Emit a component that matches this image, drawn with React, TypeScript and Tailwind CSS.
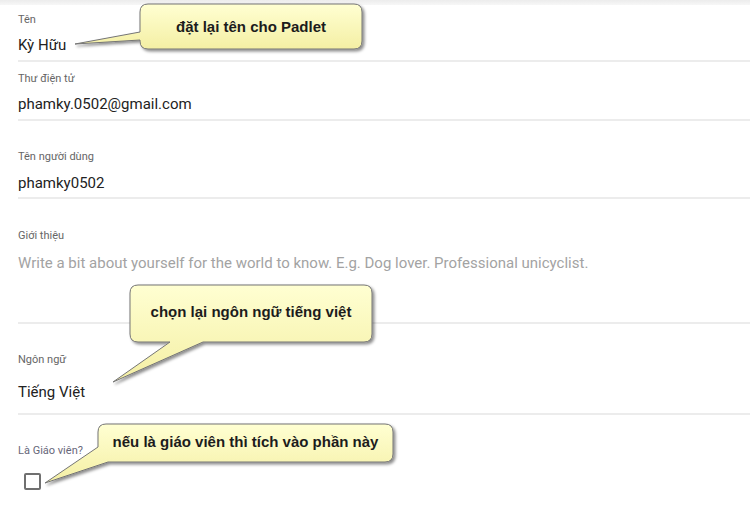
import React from 'react';

const fieldFont = { fontFamily: 'Roboto, "Liberation Sans", sans-serif' };
const noteFont = { fontFamily: '"Liberation Sans", Arial, sans-serif' };

function Field({ label, value, placeholder, top, gap, bottom }: { label: string; value?: string; placeholder?: string; top: string; gap: string; bottom: string }) {
  return (
    <div className={`${top}`}>
      <div className="text-[11px] leading-4 text-[#666]">{label}</div>
      <div className={`${gap} ${bottom} text-[15px] leading-6 ${placeholder ? 'text-[#a3a3a3]' : 'text-[#222]'}`}>
        {value ?? placeholder}
      </div>
      <div className="h-[2px] bg-[#ececec]" />
    </div>
  );
}

const callouts = [
  {
    d: 'M148,4 H354 Q362,4 362,12 V41 Q362,49 354,49 H148 Q140,49 140,41 V40 L75,44 L140,32 V12 Q140,4 148,4 Z',
  },
  {
    d: 'M138,285 H364 Q372,285 372,293 V334 Q372,342 364,342 H203 L113,382 L170,342 H138 Q130,342 130,334 V293 Q130,285 138,285 Z',
  },
  {
    d: 'M106,424 H385 Q393,424 393,432 V454 Q393,462 385,462 H108 L45,483 L98,447 V432 Q98,424 106,424 Z',
  },
];

export default function App() {
  return (
    <div className="relative w-[750px] h-[509px] bg-white overflow-hidden" style={fieldFont}>
      <div className="h-[5px] bg-gradient-to-b from-[#ececec] to-[#f7f7f7]" />

      <div className="pl-[18px]">
        <Field label="Tên" value="Kỳ Hữu" top="pt-[7px]" gap="mt-[5px]" bottom="mb-[3px]" />
        <Field label="Thư điện tử" value="phamky.0502@gmail.com" top="pt-[9px]" gap="mt-[5px]" bottom="mb-[3px]" />
        <Field label="Tên người dùng" value="phamky0502" top="pt-[28px]" gap="mt-[6px]" bottom="mb-[2px]" />
        <Field
          label="Giới thiệu"
          placeholder="Write a bit about yourself for the world to know. E.g. Dog lover. Professional unicyclist."
          top="pt-[29px]"
          gap="mt-[7px]"
          bottom="mb-[47px]"
        />
        <Field label="Ngôn ngữ" value="Tiếng Việt" top="pt-[28px]" gap="mt-[12px]" bottom="mb-[9px]" />

        <div className="pt-[28px]">
          <div className="text-[11px] leading-4 text-[#67677a]">Là Giáo viên?</div>
          <div className="mt-[14px] ml-[6px] w-[17px] h-[17px] border-2 border-[#707070] rounded-[2px]" />
        </div>
      </div>

      {/* annotation callouts */}
      <svg className="absolute inset-0 pointer-events-none" width="750" height="509" viewBox="0 0 750 509">
        <defs>
          <linearGradient id="callFill" x1="0" y1="0" x2="0" y2="1">
            <stop offset="0" stopColor="#ffffd2" />
            <stop offset="1" stopColor="#f4efa4" />
          </linearGradient>
          <filter id="callShadow" x="-10%" y="-10%" width="130%" height="140%">
            <feDropShadow dx="2" dy="2" stdDeviation="1.5" floodColor="#000" floodOpacity="0.45" />
          </filter>
        </defs>
        {callouts.map((c, i) => (
          <path key={i} d={c.d} fill="url(#callFill)" stroke="#757575" strokeWidth="1" filter="url(#callShadow)" />
        ))}
      </svg>

      <div
        className="absolute left-[140px] top-[5px] w-[222px] h-[45px] flex items-center justify-center text-[15px] font-bold text-[#1c1c1c]"
        style={noteFont}
      >
        đặt lại tên cho Padlet
      </div>
      <div
        className="absolute left-[130px] top-[285px] w-[242px] h-[54px] flex items-center justify-center text-[15px] font-bold text-[#1c1c1c]"
        style={noteFont}
      >
        chọn lại ngôn ngữ tiếng việt
      </div>
      <div
        className="absolute left-[98px] top-[424px] w-[295px] h-[37px] flex items-center justify-center text-[15px] font-bold text-[#1c1c1c]"
        style={noteFont}
      >
        nếu là giáo viên thì tích vào phần này
      </div>
    </div>
  );
}
